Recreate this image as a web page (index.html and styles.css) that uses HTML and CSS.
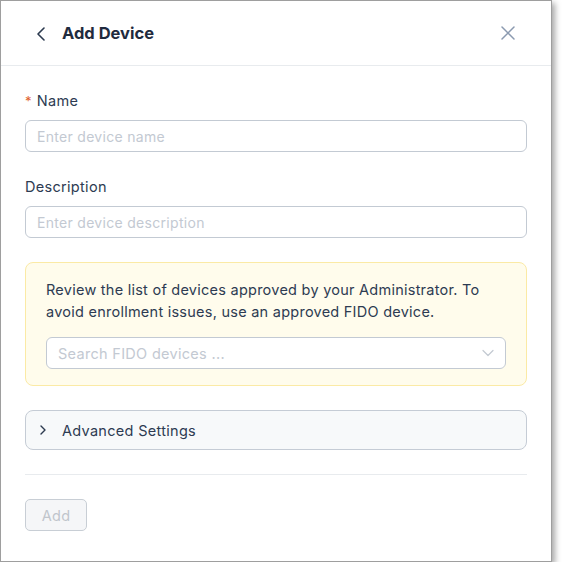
FILE: index.html
```html
<!DOCTYPE html>
<html>
<head>
<meta charset="utf-8">
<link rel="stylesheet" href="styles.css">
</head>
<body>
<div class="panel">
  <header class="header">
    <svg class="back" width="10" height="14" viewBox="0 0 10 14"><path d="M8 1 L2 7 L8 13" fill="none" stroke="#2c3a4f" stroke-width="1.6" stroke-linecap="round" stroke-linejoin="round"/></svg>
    <h1 class="title">Add Device</h1>
    <svg class="close" width="14" height="14" viewBox="0 0 14 14"><path d="M1 1 L13 13 M13 1 L1 13" fill="none" stroke="#8b9ab0" stroke-width="1.5" stroke-linecap="round"/></svg>
  </header>
  <div class="body">
    <label class="label"><span class="req">*</span>Name</label>
    <div class="input">Enter device name</div>
    <label class="label label-desc">Description</label>
    <div class="input">Enter device description</div>
    <div class="notice">
      <p class="notice-text">Review the list of devices approved by your Administrator. To avoid enrollment issues, use an approved FIDO device.</p>
      <div class="select">
        <span>Search FIDO devices ...</span>
        <svg width="12" height="8" viewBox="0 0 12 8"><path d="M1 1.5 L6 6.5 L11 1.5" fill="none" stroke="#c3c9d1" stroke-width="1.2" stroke-linecap="round" stroke-linejoin="round"/></svg>
      </div>
    </div>
    <div class="advanced">
      <svg width="8" height="10" viewBox="0 0 8 10"><path d="M2 1 L6 5 L2 9" fill="none" stroke="#2c3a4f" stroke-width="1.4" stroke-linecap="round" stroke-linejoin="round"/></svg>
      <span>Advanced Settings</span>
    </div>
    <hr class="divider">
    <button class="add">Add</button>
  </div>
</div>
</body>
</html>
```
FILE: styles.css
```css
* { box-sizing: border-box; }
body {
  margin: 0;
  background: #ffffff;
  font-family: Inter, "Noto Sans", sans-serif;
  color: #2d3b52;
  letter-spacing: 0.3px;
}
.panel {
  width: 552px;
  height: 562px;
  border: 1px solid #9e9e9e;
  background: #fff;
  box-shadow: 3px 3px 6px rgba(0,0,0,0.35);
  display: flex;
  flex-direction: column;
}
.header {
  height: 65px;
  border-bottom: 1px solid #e8ebee;
  display: flex;
  align-items: center;
  padding: 0 36px 0 35px;
  flex-shrink: 0;
}
.back { margin-right: 16px; margin-top: 1px; }
.title {
  margin: 0;
  font-size: 16.5px;
  font-weight: 700;
  color: #1f2b3e;
  flex: 1;
  letter-spacing: 0;
}
.body {
  padding: 25px 24px 0 24px;
  display: flex;
  flex-direction: column;
}
.label {
  display: block;
  font-size: 14.5px;
  line-height: 20px;
  margin-bottom: 9px;
  color: #2d3b52;
}
.req {
  color: #e0602d;
  margin-right: 5px;
  font-size: 13px;
}
.label-desc { margin-top: 25px; }
.input {
  height: 32px;
  border: 1px solid #c3cad3;
  border-radius: 6px;
  padding: 0 11px;
  display: flex;
  align-items: center;
  font-size: 14px;
  color: #c3c9d2;
}
.notice {
  margin-top: 24px;
  background: #fffcec;
  border: 1px solid #fbeaa5;
  border-radius: 8px;
  padding: 16px 20px 16px 20px;
}
.notice-text {
  margin: 0;
  font-size: 14.5px;
  line-height: 22px;
  color: #2d3b52;
  letter-spacing: 0.25px;
}
.select {
  margin-top: 14px;
  height: 32px;
  background: #fff;
  border: 1px solid #c3cad3;
  border-radius: 6px;
  padding: 0 11px;
  display: flex;
  align-items: center;
  justify-content: space-between;
  font-size: 14.5px;
  color: #c3c9d2;
}
.advanced {
  margin-top: 24px;
  height: 40px;
  background: #f7f9fa;
  border: 1px solid #c5ccd5;
  border-radius: 8px;
  display: flex;
  align-items: center;
  padding-left: 13px;
  font-size: 14.5px;
  color: #2d3b52;
}
.advanced svg { margin-right: 15px; }
.divider {
  margin: 24px 0 0 0;
  border: 0;
  border-top: 1px solid #e8ebee;
  height: 0;
}
.add {
  margin-top: 24px;
  width: 62px;
  height: 32px;
  background: #f5f6f8;
  border: 1px solid #c8ced5;
  border-radius: 5px;
  font-family: inherit;
  font-size: 14.5px;
  letter-spacing: 0.3px;
  color: #c0c5cc;
  padding: 0;
}
```
